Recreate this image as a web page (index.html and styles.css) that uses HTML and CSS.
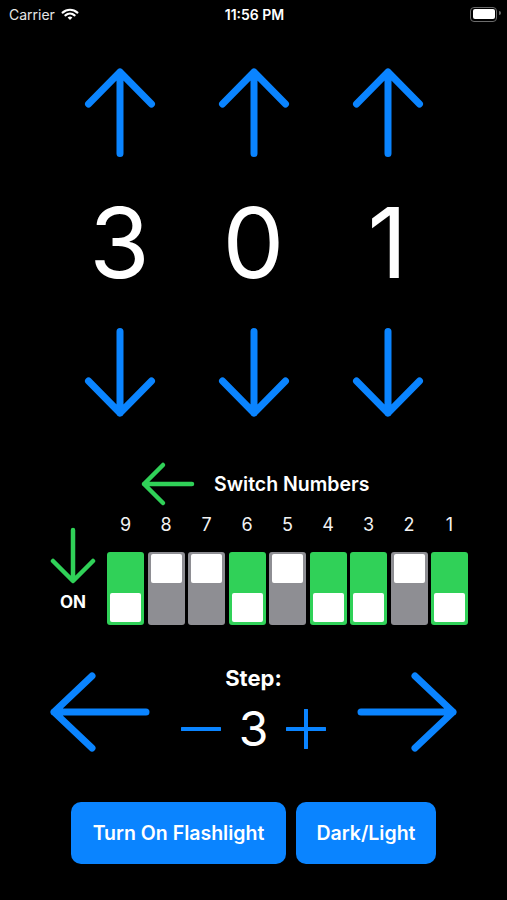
FILE: index.html
```html
<!DOCTYPE html>
<html lang="en">
  <head>
    <meta charset="utf-8">
    <title>Counter</title>
    <link rel="stylesheet" href="styles.css">
  </head>

  <body>
    <div class="status">
      <div class="carrier">
        Carrier
        <svg class="wifi" width="18" height="14" viewBox="0 0 18 14">
          <path d="M1.6 5.6 A11 11 0 0 1 16.4 5.6" />
          <path d="M4.4 8.4 A7 7 0 0 1 13.6 8.4" />
          <path class="dot" d="M9 13 L6.6 10.6 A3.4 3.4 0 0 1 11.4 10.6 Z" />
        </svg>
      </div>
      <div class="time">11:56 PM</div>
      <div class="battery"><span class="level"></span></div>
    </div>

    <div class="dials">
      <div class="dial">
        <button class="arrow-btn up"><svg width="80" height="100" viewBox="0 0 80 100"><path d="M40 91.5 V10 M8.5 42 L40 10 L71.5 42" /></svg></button>
        <div class="number">3</div>
        <button class="arrow-btn down"><svg width="80" height="100" viewBox="0 0 80 100"><path d="M40 9.5 V91 M8.5 59 L40 91 L71.5 59" /></svg></button>
      </div>
      <div class="dial">
        <button class="arrow-btn up"><svg width="80" height="100" viewBox="0 0 80 100"><path d="M40 91.5 V10 M8.5 42 L40 10 L71.5 42" /></svg></button>
        <div class="number">0</div>
        <button class="arrow-btn down"><svg width="80" height="100" viewBox="0 0 80 100"><path d="M40 9.5 V91 M8.5 59 L40 91 L71.5 59" /></svg></button>
      </div>
      <div class="dial">
        <button class="arrow-btn up"><svg width="80" height="100" viewBox="0 0 80 100"><path d="M40 91.5 V10 M8.5 42 L40 10 L71.5 42" /></svg></button>
        <div class="number">1</div>
        <button class="arrow-btn down"><svg width="80" height="100" viewBox="0 0 80 100"><path d="M40 9.5 V91 M8.5 59 L40 91 L71.5 59" /></svg></button>
      </div>
    </div>

    <div class="switch-head">
      <svg class="green-arrow" width="56" height="46" viewBox="0 0 56 46"><path d="M52 23 H4 M23 4 L4 23 L23 42" /></svg>
      <span>Switch Numbers</span>
    </div>

    <div class="dip">
      <div class="on-col">
        <svg class="green-arrow" width="46" height="58" viewBox="0 0 46 58"><path d="M23 3 V53 M3 34 L23 54 L43 34" /></svg>
        <div class="on-label">ON</div>
      </div>
      <div class="bank">
        <div class="labels">
          <span>9</span><span>8</span><span>7</span><span>6</span><span>5</span><span>4</span><span>3</span><span>2</span><span>1</span>
        </div>
        <div class="switches">
          <div class="sw on"><span class="knob"></span></div>
          <div class="sw"><span class="knob"></span></div>
          <div class="sw"><span class="knob"></span></div>
          <div class="sw on"><span class="knob"></span></div>
          <div class="sw"><span class="knob"></span></div>
          <div class="sw on"><span class="knob"></span></div>
          <div class="sw on"><span class="knob"></span></div>
          <div class="sw"><span class="knob"></span></div>
          <div class="sw on"><span class="knob"></span></div>
        </div>
      </div>
    </div>

    <div class="step">
      <button class="arrow-btn side"><svg width="100" height="84" viewBox="0 0 100 84"><path d="M96 42 H4 M42 6 L4 42 L42 78" /></svg></button>
      <div class="step-center">
        <div class="step-title">Step:</div>
        <div class="stepper">
          <svg class="sign" width="40" height="40" viewBox="0 0 40 40"><path d="M1 20 H39" /></svg>
          <span class="step-value">3</span>
          <svg class="sign" width="40" height="40" viewBox="0 0 40 40"><path d="M1 20 H39 M20 1 V39" /></svg>
        </div>
      </div>
      <button class="arrow-btn side"><svg width="100" height="84" viewBox="0 0 100 84"><path d="M4 42 H96 M58 6 L96 42 L58 78" /></svg></button>
    </div>

    <div class="actions">
      <button class="action wide">Turn On Flashlight</button>
      <button class="action">Dark/Light</button>
    </div>
  </body>
</html>
```

FILE: styles.css
```css
html {
  background: #000;
}

body {
  margin: 0;
  width: 507px;
  height: 900px;
  background: #000;
  color: #fff;
  font-family: Inter, "Noto Sans", sans-serif;
  overflow: hidden;
}

button {
  font-family: inherit;
}

svg {
  display: block;
}

/* status bar */
.status {
  height: 28px;
  display: grid;
  grid-template-columns: 1fr auto 1fr;
  align-items: center;
  padding: 0 7px 0 9px;
  font-size: 14px;
}

.carrier {
  display: flex;
  align-items: center;
  gap: 6px;
  color: #e6e6e6;
}

.wifi path {
  fill: none;
  stroke: #fff;
  stroke-width: 2.2;
  stroke-linecap: round;
}

.wifi .dot {
  fill: #fff;
  stroke: none;
}

.time {
  font-weight: 600;
}

.battery {
  justify-self: end;
  position: relative;
  width: 22px;
  height: 10px;
  border: 1.5px solid #6b6b6b;
  border-radius: 4px;
  padding: 1.5px;
  margin-right: 3px;
}

.battery::after {
  content: "";
  position: absolute;
  right: -4.5px;
  top: 3px;
  width: 2px;
  height: 4px;
  background: #6b6b6b;
  border-radius: 0 2px 2px 0;
}

.battery .level {
  display: block;
  height: 100%;
  background: #fff;
  border-radius: 2px;
}

/* digit dials */
.arrow-btn {
  background: none;
  border: none;
  padding: 0;
  cursor: pointer;
  display: block;
}

.arrow-btn path {
  fill: none;
  stroke: #0a84ff;
  stroke-width: 7;
  stroke-linecap: round;
  stroke-linejoin: round;
}

.dials {
  display: grid;
  grid-template-columns: repeat(3, 134px);
  justify-content: center;
  margin-top: 34px;
}

.dial {
  display: flex;
  flex-direction: column;
  align-items: center;
}

.number {
  margin-top: 32px;
  font-size: 98px;
  line-height: 98px;
  height: 98px;
}

.dial .down {
  margin-top: 30px;
}

/* dip switches */
.green-arrow path {
  fill: none;
  stroke: #30d158;
  stroke-width: 4.5;
  stroke-linecap: round;
  stroke-linejoin: round;
}

.switch-head {
  display: flex;
  align-items: center;
  gap: 18px;
  margin: 39px 0 0 140px;
  height: 46px;
  font-size: 19.5px;
  font-weight: 600;
}

.dip {
  display: flex;
  margin: 7px 0 0 50px;
}

.on-col {
  width: 57px;
  display: flex;
  flex-direction: column;
  padding-top: 13px;
}

.on-label {
  width: 46px;
  margin-top: 7px;
  text-align: center;
  font-size: 17px;
  font-weight: 700;
  line-height: 20px;
}

.labels,
.switches {
  display: grid;
  grid-template-columns: repeat(9, 37px);
  column-gap: 3.5px;
}

.labels span {
  text-align: center;
  font-size: 18px;
  line-height: 22px;
  color: #f2f2f2;
}

.switches {
  margin-top: 16px;
}

.sw {
  height: 73px;
  box-sizing: border-box;
  padding: 2px 3px 3px;
  border-radius: 3px;
  background: #8e8e93;
  display: flex;
  flex-direction: column;
  justify-content: flex-start;
}

.sw.on {
  background: #30d158;
  justify-content: flex-end;
}

.knob {
  height: 29px;
  background: #fff;
  border-radius: 2px;
}

/* step control */
.step {
  display: flex;
  justify-content: space-between;
  align-items: flex-start;
  margin-top: 40px;
  padding: 0 50px;
}

.step .side {
  margin-top: 5px;
}

.step-center {
  display: flex;
  flex-direction: column;
  align-items: center;
}

.step-title {
  font-size: 22px;
  font-weight: 700;
  line-height: 26px;
}

.stepper {
  display: flex;
  align-items: center;
  gap: 18px;
  margin-top: 14px;
  height: 48px;
}

.step-value {
  font-size: 48px;
  line-height: 48px;
}

.sign path {
  fill: none;
  stroke: #0a84ff;
  stroke-width: 4;
  stroke-linecap: round;
}

/* bottom buttons */
.actions {
  display: flex;
  justify-content: center;
  gap: 10px;
  margin-top: 48px;
}

.action {
  height: 62px;
  width: 140px;
  border: none;
  border-radius: 10px;
  background: #0a84ff;
  color: #fff;
  font-size: 19.5px;
  font-weight: 600;
  cursor: pointer;
}

.action.wide {
  width: 215px;
}
```
